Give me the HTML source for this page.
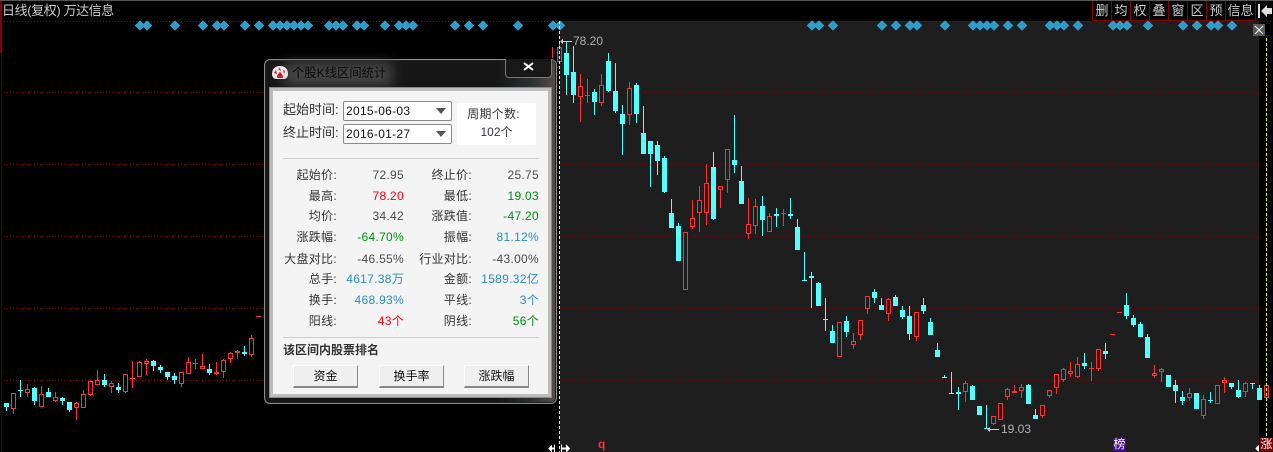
<!DOCTYPE html>
<html lang="zh-CN">
<head>
<meta charset="utf-8">
<title>个股K线区间统计</title>
<style>
html,body{margin:0;padding:0;background:#000}
body{position:relative;width:1273px;height:452px;overflow:hidden;font-family:"Liberation Sans","WenQuanYi Zen Hei","Noto Sans CJK SC",sans-serif;font-size:12px}
.a{position:absolute}
.t{position:absolute;white-space:nowrap;line-height:14px;height:14px}
svg.c{position:absolute;left:0;top:0}
.l{color:#333;letter-spacing:.3px}
.g{color:#008a10;letter-spacing:.3px}.r{color:#f00010;letter-spacing:.3px}.b{color:#2a8cc4;letter-spacing:.3px}.n{color:#4a4a4a;letter-spacing:.3px}
.tb{position:absolute;top:1px;height:19px;line-height:19px;text-align:center;color:#ccc;font-size:13px;border-bottom:1px solid #800000;border-left:1px solid #800000;box-sizing:content-box}
.btn{position:absolute;top:365px;width:63px;line-height:20px;text-align:center;background:#efefef;color:#111;border-top:1px solid #fff;border-left:1px solid #fff;border-right:1px solid #888;border-bottom:2px solid #888;box-sizing:content-box;height:20px;font-size:12px}
.sel{position:absolute;left:343px;width:107px;height:18px;background:#fff;border:1px solid #8a8a8a;border-radius:2px;color:#111;line-height:18px;letter-spacing:.3px;text-indent:2px;font-size:12px}
.tri{position:absolute;left:92px;top:6px;width:0;height:0;border-left:5px solid transparent;border-right:5px solid transparent;border-top:6px solid #555}
</style>
</head>
<body>
<div class="a" style="left:0;top:0;width:1273px;height:1px;background:#555"></div>
<div class="a" style="left:0;top:1px;width:2px;height:52px;background:#800000"></div>
<div class="a" style="left:1px;top:53px;width:1px;height:399px;background:#500000"></div>
<div class="a" style="left:560px;top:21px;width:699px;height:431px;background:#1e1e1e"></div>

<svg class="c" width="1273" height="452" viewBox="0 0 1273 452" shape-rendering="crispEdges">
<path fill="none" stroke="#840000" stroke-dasharray="1 2" d="M4 21.5H1273M4 92.5H1259M4 164.5H1259M4 236.5H1259M4 308.5H1259M4 380.5H1259"/>
<path fill="#2f9dc9" stroke="#2f9dc9" stroke-width=".8" d="M135.5 25.5l4.5-4.5 4.5 4.5-4.5 4.5zM142.5 25.5l4.5-4.5 4.5 4.5-4.5 4.5zM170.5 25.5l4.5-4.5 4.5 4.5-4.5 4.5zM198.5 25.5l4.5-4.5 4.5 4.5-4.5 4.5zM212.5 25.5l4.5-4.5 4.5 4.5-4.5 4.5zM219.5 25.5l4.5-4.5 4.5 4.5-4.5 4.5zM240.5 25.5l4.5-4.5 4.5 4.5-4.5 4.5zM254.5 25.5l4.5-4.5 4.5 4.5-4.5 4.5zM268.5 25.5l4.5-4.5 4.5 4.5-4.5 4.5zM275.5 25.5l4.5-4.5 4.5 4.5-4.5 4.5zM282.5 25.5l4.5-4.5 4.5 4.5-4.5 4.5zM289.5 25.5l4.5-4.5 4.5 4.5-4.5 4.5zM296.5 25.5l4.5-4.5 4.5 4.5-4.5 4.5zM303.5 25.5l4.5-4.5 4.5 4.5-4.5 4.5zM324.5 25.5l4.5-4.5 4.5 4.5-4.5 4.5zM331.5 25.5l4.5-4.5 4.5 4.5-4.5 4.5zM338.5 25.5l4.5-4.5 4.5 4.5-4.5 4.5zM352.5 25.5l4.5-4.5 4.5 4.5-4.5 4.5zM359.5 25.5l4.5-4.5 4.5 4.5-4.5 4.5zM380.5 25.5l4.5-4.5 4.5 4.5-4.5 4.5zM394.5 25.5l4.5-4.5 4.5 4.5-4.5 4.5zM401.5 25.5l4.5-4.5 4.5 4.5-4.5 4.5zM408.5 25.5l4.5-4.5 4.5 4.5-4.5 4.5zM450.5 25.5l4.5-4.5 4.5 4.5-4.5 4.5zM464.5 25.5l4.5-4.5 4.5 4.5-4.5 4.5zM478.5 25.5l4.5-4.5 4.5 4.5-4.5 4.5zM513.5 25.5l4.5-4.5 4.5 4.5-4.5 4.5zM548.5 25.5l4.5-4.5 4.5 4.5-4.5 4.5zM555.5 25.5l4.5-4.5 4.5 4.5-4.5 4.5zM807.5 25.5l4.5-4.5 4.5 4.5-4.5 4.5zM814.5 25.5l4.5-4.5 4.5 4.5-4.5 4.5zM828.5 25.5l4.5-4.5 4.5 4.5-4.5 4.5zM877.5 25.5l4.5-4.5 4.5 4.5-4.5 4.5zM891.5 25.5l4.5-4.5 4.5 4.5-4.5 4.5zM905.5 25.5l4.5-4.5 4.5 4.5-4.5 4.5zM912.5 25.5l4.5-4.5 4.5 4.5-4.5 4.5zM940.5 25.5l4.5-4.5 4.5 4.5-4.5 4.5zM968.5 25.5l4.5-4.5 4.5 4.5-4.5 4.5zM975.5 25.5l4.5-4.5 4.5 4.5-4.5 4.5zM982.5 25.5l4.5-4.5 4.5 4.5-4.5 4.5zM989.5 25.5l4.5-4.5 4.5 4.5-4.5 4.5zM1003.5 25.5l4.5-4.5 4.5 4.5-4.5 4.5zM1017.5 25.5l4.5-4.5 4.5 4.5-4.5 4.5zM1045.5 25.5l4.5-4.5 4.5 4.5-4.5 4.5zM1052.5 25.5l4.5-4.5 4.5 4.5-4.5 4.5zM1059.5 25.5l4.5-4.5 4.5 4.5-4.5 4.5zM1073.5 25.5l4.5-4.5 4.5 4.5-4.5 4.5zM1108.5 25.5l4.5-4.5 4.5 4.5-4.5 4.5zM1115.5 25.5l4.5-4.5 4.5 4.5-4.5 4.5zM1122.5 25.5l4.5-4.5 4.5 4.5-4.5 4.5zM1143.5 25.5l4.5-4.5 4.5 4.5-4.5 4.5zM1178.5 25.5l4.5-4.5 4.5 4.5-4.5 4.5zM1192.5 25.5l4.5-4.5 4.5 4.5-4.5 4.5zM1206.5 25.5l4.5-4.5 4.5 4.5-4.5 4.5zM1213.5 25.5l4.5-4.5 4.5 4.5-4.5 4.5zM1227.5 25.5l4.5-4.5 4.5 4.5-4.5 4.5z"/>

<!-- left pane candles -->
<path fill="#54ffff" stroke="#54ffff" d="M6.5 403V411M4.5 403.5h4v3h-4zM20.5 380V397M18 390.5h5M34.5 387V405M32.5 388.5h4v12h-4zM48.5 388V397M46.5 392.5h4v4h-4zM62.5 397V405M60.5 398.5h4v2h-4zM69.5 402V412M67.5 402.5h4v7h-4zM104.5 374V387M102.5 380.5h4v4h-4zM118.5 383V393M116.5 387.5h4v2h-4zM153.5 360V371M151.5 361.5h4v4h-4zM160.5 365V373M158.5 367.5h4v2h-4zM167.5 372V380M165.5 372.5h4v4h-4zM174.5 373V384M172.5 376.5h4v3h-4zM209.5 364V375M207.5 369.5h4v3h-4zM244.5 346V356M242.5 352.5h4v1h-4z"/>
<path fill="#ff3232" stroke="#ff3232" d="M13.5 393V414M27.5 384V397M41.5 386V407M55.5 392V402M76.5 402V420M83.5 390V408M90.5 380V396M97.5 370V385M111.5 381V393M125.5 374V393M132.5 361V388M130 378.5h5M139.5 361V377M146.5 359V375M181.5 372V387M188.5 357V374M195.5 359V369M193 363.5h5M202.5 354V369M216.5 362V375M214.5 372.5h4v1h-4zM223.5 359V378M230.5 352V363M237.5 350V359M235.5 351.5h4v1h-4zM251.5 335V357M256 316.5h5M552.5 47V58"/>
<path fill="#000" stroke="#ff3232" d="M11.5 393.5h4v15h-4zM25.5 389.5h4v3h-4zM39.5 394.5h4v12h-4zM53.5 397.5h4v3h-4zM74.5 403.5h4v4h-4zM81.5 394.5h4v13h-4zM88.5 381.5h4v13h-4zM95.5 380.5h4v4h-4zM109.5 383.5h4v3h-4zM123.5 374.5h4v17h-4zM137.5 362.5h4v14h-4zM144.5 361.5h4v2h-4zM179.5 372.5h4v11h-4zM186.5 362.5h4v11h-4zM200.5 366.5h4v2h-4zM221.5 360.5h4v11h-4zM228.5 353.5h4v5h-4zM249.5 338.5h4v16h-4z"/>

<!-- right pane candles -->
<path fill="#54ffff" stroke="#54ffff" d="M566.5 42V95M564.5 53.5h4v21h-4zM573.5 46V103M571.5 72.5h4v22h-4zM594.5 89V115M592.5 92.5h4v9h-4zM608.5 53V92M606.5 61.5h4v29h-4zM615.5 63V113M613.5 91.5h4v19h-4zM622.5 105V155M620.5 114.5h4v9h-4zM636.5 83V123M634.5 85.5h4v28h-4zM643.5 106V154M641.5 133.5h4v20h-4zM650.5 141V187M648.5 141.5h4v12h-4zM657.5 141V175M655.5 145.5h4v15h-4zM664.5 156V193M662.5 158.5h4v33h-4zM671.5 199V228M669.5 213.5h4v14h-4zM678.5 223V261M676.5 226.5h4v34h-4zM713.5 152V220M711.5 167.5h4v51h-4zM734.5 115V173M732.5 160.5h4v4h-4zM741.5 166V204M739.5 181.5h4v22h-4zM762.5 196V236M760.5 206.5h4v13h-4zM776.5 208V227M774.5 214.5h4v1h-4zM790.5 198V219M788.5 214.5h4v1h-4zM797.5 219V250M795.5 227.5h4v22h-4zM804.5 252V281M802 280.5h5M811.5 272V308M809.5 276.5h4v1h-4zM818.5 282V306M816.5 283.5h4v22h-4zM825.5 298V331M823 319.5h5M832.5 325V343M830.5 331.5h4v11h-4zM846.5 316V337M844.5 321.5h4v10h-4zM874.5 289V303M872.5 292.5h4v5h-4zM881.5 298V310M879.5 305.5h4v4h-4zM895.5 295V306M893.5 297.5h4v8h-4zM902.5 306V319M900.5 310.5h4v6h-4zM909.5 306V340M907.5 316.5h4v17h-4zM923.5 298V314M921.5 305.5h4v5h-4zM930.5 318V335M928.5 322.5h4v12h-4zM937.5 343V357M935.5 350.5h4v6h-4zM944.5 375V378M942 377.5h5M951.5 372V394M949 393.5h5M958.5 387V410M956.5 392.5h4v1h-4zM972.5 385V400M970.5 386.5h4v13h-4zM977.5 406.5h4v8h-4zM986.5 405V429M984 428.5h5M1028.5 384V404M1026.5 385.5h4v18h-4zM1035.5 409V419M1033.5 415.5h4v3h-4zM1084.5 353V369M1082.5 363.5h4v2h-4zM1105.5 343V359M1103.5 351.5h4v2h-4zM1126.5 293V319M1124.5 305.5h4v10h-4zM1133.5 315V327M1131.5 318.5h4v6h-4zM1140.5 322V337M1138.5 324.5h4v12h-4zM1147.5 334V358M1145.5 337.5h4v20h-4zM1166.5 375.5h4v11h-4zM1175.5 380V403M1173.5 385.5h4v5h-4zM1182.5 391V405M1180.5 397.5h4v3h-4zM1194.5 393.5h4v15h-4zM1210.5 392V403M1208 400.5h5M1231.5 383V389M1229.5 383.5h4v3h-4zM1238.5 380V398M1236.5 390.5h4v6h-4zM1252.5 383V389M1250 383.5h5M1259.5 385V400M1257.5 388.5h4v11h-4z"/>
<path fill="#ff3232" stroke="#ff3232" d="M559.5 41V62M580.5 74V122M587.5 79V103M585 95.5h5M601.5 74V106M629.5 82V125M692.5 200V229M699.5 186V232M706.5 164V225M720.5 186V208M727.5 149V193M748.5 198V239M755.5 199V234M769.5 213V232M783.5 209V226M781 213.5h5M853.5 333V349M860.5 320V340M867.5 296V314M888.5 298V321M916.5 312V341M965.5 381V402M993.5 416V425M1007.5 388V400M1014.5 385V393M1012.5 391.5h4v1h-4zM1021.5 384V398M1042.5 405V418M1049.5 390V398M1056.5 374V394M1063.5 368V382M1070.5 362V377M1077.5 357V378M1091.5 362V381M1089 368.5h5M1098.5 349V371M1110 334.5h5M1117 312.5h5M1154.5 365V378M1161.5 368V382M1189.5 388V401M1203.5 395V419M1224.5 377V393M1245.5 382V397"/>
<path fill="#1e1e1e" stroke="#ff3232" d="M557.5 47.5h4v14h-4zM578.5 86.5h4v10h-4zM599.5 85.5h4v17h-4zM627.5 88.5h4v26h-4zM683.5 232.5h4v57h-4zM690.5 218.5h4v8h-4zM697.5 200.5h4v12h-4zM704.5 183.5h4v29h-4zM718.5 186.5h4v3h-4zM725.5 149.5h4v30h-4zM746.5 224.5h4v9h-4zM753.5 206.5h4v19h-4zM767.5 216.5h4v15h-4zM837.5 322.5h4v34h-4zM851.5 341.5h4v3h-4zM858.5 320.5h4v14h-4zM865.5 296.5h4v12h-4zM886.5 299.5h4v14h-4zM914.5 312.5h4v24h-4zM963.5 383.5h4v8h-4zM991.5 416.5h4v7h-4zM998.5 403.5h4v16h-4zM1005.5 389.5h4v7h-4zM1019.5 387.5h4v3h-4zM1040.5 405.5h4v10h-4zM1047.5 390.5h4v5h-4zM1054.5 374.5h4v13h-4zM1061.5 369.5h4v10h-4zM1068.5 371.5h4v2h-4zM1075.5 364.5h4v12h-4zM1096.5 349.5h4v19h-4zM1152.5 373.5h4v2h-4zM1159.5 369.5h4v2h-4zM1187.5 393.5h4v4h-4zM1201.5 399.5h4v16h-4zM1215.5 385.5h4v18h-4zM1222.5 380.5h4v2h-4zM1243.5 383.5h4v8h-4zM1264.5 385.5h4v12h-4z"/>

<!-- price arrows -->
<path fill="#ccc" d="M560 41.5l3-3v2.500h9v1h-9v2.500zM987 429.500l3-3v2.500h9v1h-9v2.500z"/>
<!-- crosshair dashes -->
<path fill="none" stroke="#ffff30" stroke-dasharray="3 2" d="M559.500 21V452M1266.500 38V452"/>
<!-- bottom markers -->
<path fill="#fff" d="M548 448.500l4-4v3h2v-3h1v8h-1v-3h-2v3zM561 444.500h1v3h4v-3l4 4-4 4v-3h-4v3h-1zM1255 448.500l4-4v8z"/>
</svg>

<div class="t" style="left:2px;top:4px;color:#ccc;font-size:13px;letter-spacing:-.4px">日线(复权) 万达信息</div>

<!-- toolbar -->
<div class="tb" style="left:1092px;width:18px">删</div>
<div class="tb" style="left:1111px;width:18px">均</div>
<div class="tb" style="left:1130px;width:18px">权</div>
<div class="tb" style="left:1149px;width:18px">叠</div>
<div class="tb" style="left:1168px;width:18px">窗</div>
<div class="tb" style="left:1187px;width:18px">区</div>
<div class="tb" style="left:1206px;width:18px">预</div>
<div class="tb" style="left:1225px;width:29px;border-right:1px solid #800000">信息</div>
<svg class="c" style="left:1258px;top:4px" width="15" height="14" viewBox="0 0 15 14"><path fill="#ddd" d="M0 0h2v14H0zM3 7l6-6v3h5v6H9v3z"/></svg>

<!-- pane close -->
<div class="a" style="left:1253px;top:24px;width:12px;height:12px;background:#5a5a5a"></div>
<svg class="c" style="left:1253px;top:24px" width="12" height="12" viewBox="0 0 12 12"><path stroke="#fff" stroke-width="1" fill="none" d="M2 2l8 8M10 2l-8 8"/></svg>

<div class="t" style="left:573px;top:34px;color:#b0b0b0;font-size:12px">78.20</div>
<div class="t" style="left:1001px;top:422px;color:#b0b0b0;font-size:12px">19.03</div>
<div class="t" style="left:598px;top:437px;color:#ff3232;font-weight:bold;font-size:12px">q</div>
<div class="t" style="left:1113px;top:438px;width:13px;height:13px;line-height:13px;background:#4b0f9c;color:#fff;text-align:center;font-size:12px">榜</div>
<div class="t" style="left:1260px;top:438px;width:13px;height:13px;line-height:13px;background:#800000;color:#fff;text-align:center;font-size:12px">涨</div>

<!-- dialog -->
<div class="a" style="left:264px;top:59px;width:291px;height:343px;border:1px solid #8a8a8a;border-radius:6px;background:linear-gradient(90deg,#161616 0%,#161616 80%,#2a3232 92%,#5a4c4c 100%);box-shadow:inset 0 0 0 1px #222"></div>
<div class="a" style="left:284px;top:62px;width:108px;height:24px;background:#555;filter:blur(6px);opacity:.75"></div>
<svg class="c" style="left:271px;top:65px" width="18" height="15" viewBox="0 0 18 15"><path fill="#e8e8e8" d="M1 9C1 4 4 1 9 1s8 3 8 8c0 3-2 5-4 5H5C3 14 1 12 1 9z"/><path fill="#d8141c" d="M3 8l2-3 1 4zM7 4l2-1 1 3zM12 5l2 1-1 3zM9 7c1 1 3 3 3 5 0 1-1 1-2 1H8c-1 0-2 0-2-1 0-2 2-4 3-5z"/></svg>
<div class="t" style="left:292px;top:66px;color:#0a0a0a;font-size:12.300px">个股K线区间统计</div>
<div class="a" style="left:505px;top:59px;width:45px;height:18px;border:1px solid #777;border-top:none;border-radius:0 0 4px 4px;background:#181818"></div>
<svg class="c" style="left:523px;top:62px" width="11" height="9" viewBox="0 0 11 9"><path stroke="#fff" stroke-width="2" fill="none" d="M1 1l9 7M10 1l-9 7"/></svg>

<div class="a" style="left:269px;top:87px;width:281px;height:309px;border:1px solid #8a8a8a;background:#f4f4f4;box-shadow:inset 0 0 0 3px #bdbdbd"></div>

<div class="t l" style="left:283px;top:103px;font-size:13px;letter-spacing:0">起始时间:</div>
<div class="t l" style="left:283px;top:126px;font-size:13px;letter-spacing:0">终止时间:</div>
<div class="sel" style="top:101px">2015-06-03<div class="tri"></div></div>
<div class="sel" style="top:124px">2016-01-27<div class="tri"></div></div>
<div class="a" style="left:457px;top:103px;width:79px;height:42px;background:#fff;border-radius:2px"></div>
<div class="t l" style="left:454px;width:79px;top:107px;text-align:center">周期个数:</div>
<div class="t" style="left:457px;width:79px;top:125px;text-align:center;color:#334">102个</div>
<div class="a" style="left:283px;top:158px;width:256px;height:1px;background:#ccc"></div>

<div class="t l" style="right:936px;top:168px">起始价:</div><div class="t n" style="right:869px;top:168px">72.95</div>
<div class="t l" style="right:801px;top:168px">终止价:</div><div class="t n" style="right:734px;top:168px">25.75</div>
<div class="t l" style="right:936px;top:189px">最高:</div><div class="t r" style="right:869px;top:189px">78.20</div>
<div class="t l" style="right:801px;top:189px">最低:</div><div class="t g" style="right:734px;top:189px">19.03</div>
<div class="t l" style="right:936px;top:209px">均价:</div><div class="t n" style="right:869px;top:209px">34.42</div>
<div class="t l" style="right:801px;top:209px">涨跌值:</div><div class="t g" style="right:734px;top:209px">-47.20</div>
<div class="t l" style="right:936px;top:230px">涨跌幅:</div><div class="t g" style="right:869px;top:230px">-64.70%</div>
<div class="t l" style="right:801px;top:230px">振幅:</div><div class="t b" style="right:734px;top:230px">81.12%</div>
<div class="t l" style="right:936px;top:252px">大盘对比:</div><div class="t n" style="right:869px;top:252px">-46.55%</div>
<div class="t l" style="right:801px;top:252px">行业对比:</div><div class="t n" style="right:734px;top:252px">-43.00%</div>
<div class="t l" style="right:936px;top:272px">总手:</div><div class="t b" style="right:869px;top:272px">4617.38万</div>
<div class="t l" style="right:801px;top:272px">金额:</div><div class="t b" style="right:734px;top:272px">1589.32亿</div>
<div class="t l" style="right:936px;top:293px">换手:</div><div class="t b" style="right:869px;top:293px">468.93%</div>
<div class="t l" style="right:801px;top:293px">平线:</div><div class="t b" style="right:734px;top:293px">3个</div>
<div class="t l" style="right:936px;top:314px">阳线:</div><div class="t r" style="right:869px;top:314px">43个</div>
<div class="t l" style="right:801px;top:314px">阴线:</div><div class="t g" style="right:734px;top:314px">56个</div>

<div class="a" style="left:283px;top:337px;width:256px;height:1px;background:#ccc"></div>
<div class="t" style="left:283px;top:343px;color:#333;font-weight:bold">该区间内股票排名</div>
<div class="btn" style="left:293px">资金</div>
<div class="btn" style="left:379px">换手率</div>
<div class="btn" style="left:464px">涨跌幅</div>
</body>
</html>
